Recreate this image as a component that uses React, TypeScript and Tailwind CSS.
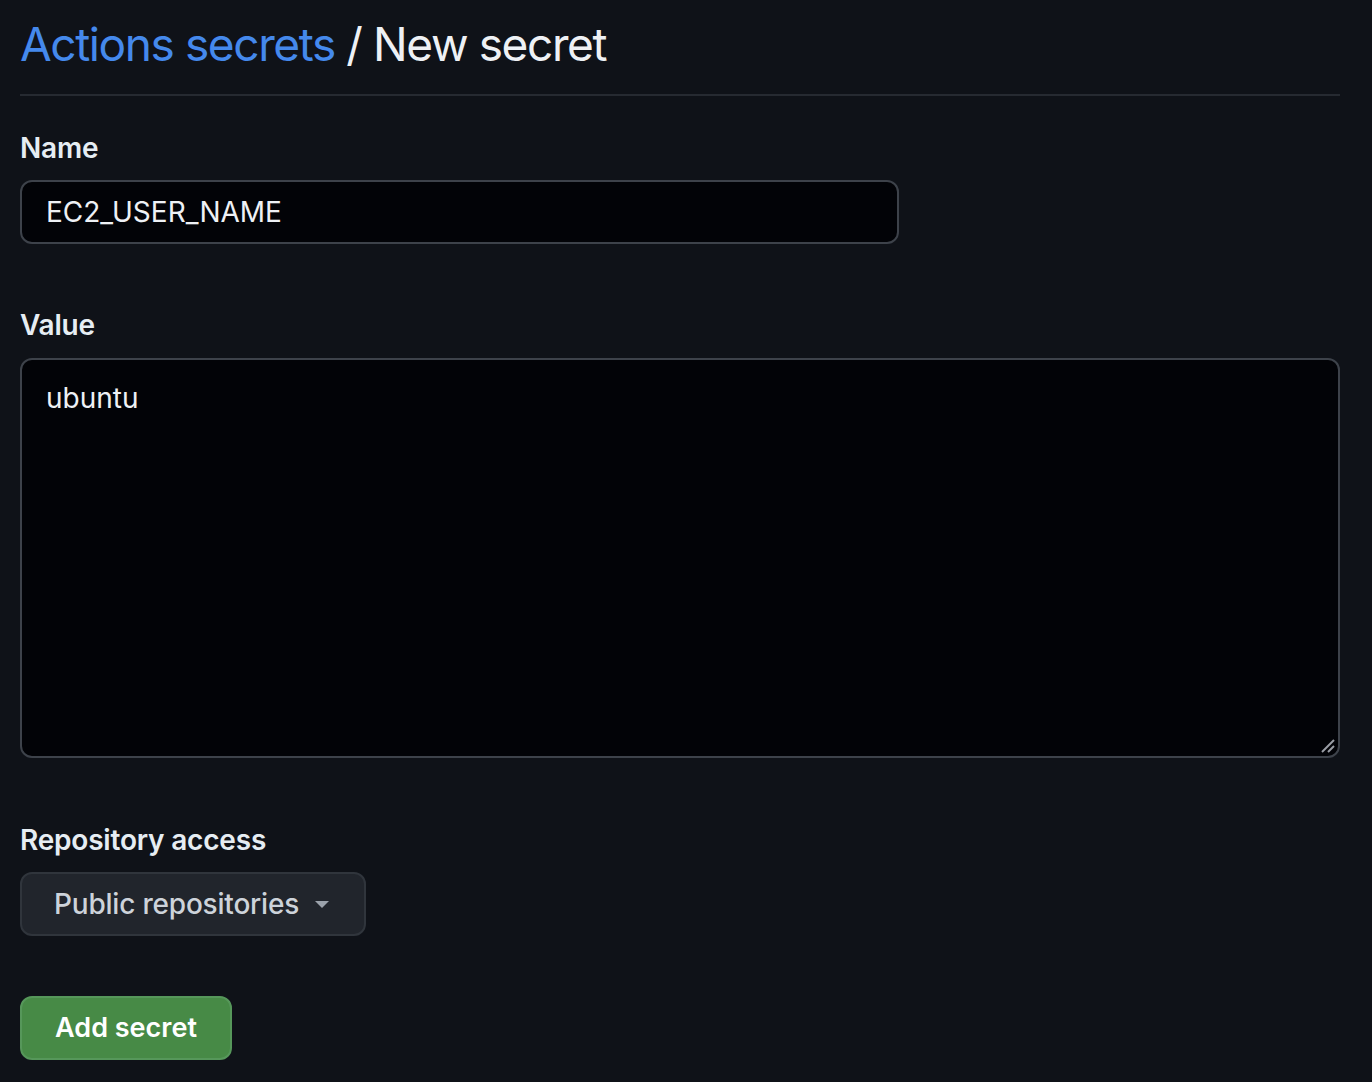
import { ChevronDown } from 'lucide-react';

export default function App() {
  return (
    <div className="min-h-screen w-full bg-[#0f1218] px-5 font-['Inter',sans-serif] text-[#e6edf3]">
      <div className="w-[1320px]">
        <div className="flex h-[96px] items-center border-b-2 border-[#262a31] pb-[6px]">
          <h1 className="text-[46px] font-normal leading-none tracking-[-1.4px]">
            <a className="text-[#4589ec]">Actions secrets</a>
            <span className="text-[#eef1f5]"> / New secret</span>
          </h1>
        </div>

        <form className="flex flex-col">
          <label className="mt-[36px] mb-[16px] block text-[28px] font-semibold leading-[32px] tracking-[-0.2px]">Name</label>
          <div className="flex h-[64px] w-[879px] items-center rounded-[12px] border-2 border-[#3d424a] bg-[#020307] px-[24px] text-[28px] text-[#eef1f5]">
            EC2_USER_NAME
          </div>

          <label className="mt-[65px] mb-[17px] block text-[28px] font-semibold leading-[32px] tracking-[-0.2px]">Value</label>
          <div className="relative h-[400px] w-[1320px] rounded-[12px] border-2 border-[#3d424a] bg-[#020307] px-[24px] pt-[20px] text-[28px] leading-[36px] text-[#eef1f5]">
            ubuntu
            <svg className="absolute right-[3px] bottom-[3px]" width="14" height="14" viewBox="0 0 14 14">
              <path d="M1 13 L13 1" stroke="#9a9ea5" strokeWidth="2" />
              <path d="M7 13 L13 7" stroke="#9a9ea5" strokeWidth="2" />
            </svg>
          </div>

          <label className="mt-[66px] mb-[16px] block text-[28px] font-semibold leading-[32px] tracking-[-0.2px]">Repository access</label>
          <button
            type="button"
            className="flex h-[64px] w-[346px] items-center gap-[14px] rounded-[12px] border-2 border-[#30353c] bg-[#21252c] pl-[32px] text-[28px] font-medium text-[#cdd3da] tracking-[-0.2px]"
          >
            Public repositories
            <svg width="18" height="10" viewBox="0 0 18 10">
              <path d="M2 2 L16 2 L9 9 Z" fill="#9ba2ab" />
            </svg>
          </button>

          <button
            type="button"
            className="mt-[60px] flex h-[64px] w-[212px] items-center justify-center rounded-[12px] border-2 border-[#56975a] bg-[#478a46] text-[27px] font-semibold text-white"
          >
            Add secret
          </button>
        </form>
      </div>
      <span className="hidden"><ChevronDown /></span>
    </div>
  );
}
